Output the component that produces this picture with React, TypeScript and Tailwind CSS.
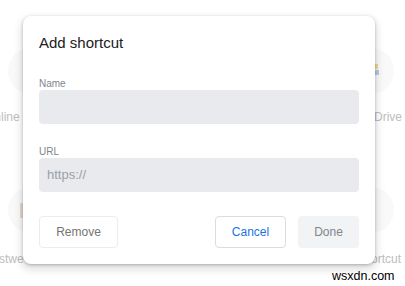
import React from "react";

export default function App() {
  const circle = "relative w-[48px] h-[46px] rounded-full bg-[#f9f9fa]";
  const label = "whitespace-nowrap text-[12px] leading-[14px] text-[#bdbdbd]";
  return (
    <div className="relative w-[405px] h-[286px] overflow-hidden bg-white font-['Liberation_Sans',Arial,sans-serif]">
      {/* background shortcut grid (dimmed, behind the modal) */}
      <div className="flex flex-col gap-[63px] pt-[48px]">
        <div className="flex justify-between">
          <div className="flex flex-col items-start gap-[16px]">
            <div className={`${circle} ml-[8px]`} />
            <div className={`${label} -ml-[15px]`}>Online</div>
          </div>
          <div className="flex flex-col items-end gap-[16px]">
            <div className={`${circle} mr-[11px]`}>
              <div className="absolute left-[29px] top-[16px] w-[3px] h-[5px] bg-[#f3d98a]" />
              <div className="absolute left-[29px] top-[22px] w-[4px] h-[5px] bg-[#b8c8ea]" />
            </div>
            <div className={`${label} mr-[3px]`}>Drive</div>
          </div>
        </div>
        <div className="flex justify-between">
          <div className="flex flex-col items-start gap-[19px]">
            <div className={`${circle} ml-[8px]`}>
              <div className="absolute left-[12px] top-[16px] w-[4px] h-[15px] bg-[#e6d8cf]" />
            </div>
            <div className={`${label} -ml-[1px]`}>stwe</div>
          </div>
          <div className="flex flex-col items-end gap-[19px]">
            <div className={`${circle} mr-[11px]`} />
            <div className={`${label} mr-[4px]`}>Shortcut</div>
          </div>
        </div>
      </div>

      {/* watermark */}
      <div className="absolute left-[332px] top-[269px] text-[12.5px] leading-[14px] text-black">wsxdn.com</div>

      {/* modal dialog */}
      <div className="absolute left-[23px] top-[16px] w-[352px] h-[248px] rounded-[8px] bg-white shadow-[0_1px_3px_rgba(0,0,0,0.25),0_4px_8px_2px_rgba(0,0,0,0.12)] flex flex-col px-[16px] pt-[17px]">
        <div className="text-[15px] leading-[20px] text-[#202124]">Add shortcut</div>

        <div className="mt-[24px] text-[10px] leading-[13px] text-[#80868b]">Name</div>
        <div className="h-[34px] w-[320px] rounded-[4px] bg-[#e8eaed]" />

        <div className="mt-[21px] text-[10px] leading-[13px] text-[#80868b]">URL</div>
        <div className="h-[34px] w-[320px] rounded-[4px] bg-[#e8eaed] flex items-center pl-[8px] text-[13px] text-[#9aa0a6]">
          https://
        </div>

        <div className="mt-[24px] flex items-center w-[320px]">
          <button className="h-[32px] w-[79px] rounded-[4px] border border-[#ececec] bg-white text-[12px] text-[#757575]">
            Remove
          </button>
          <div className="flex-1" />
          <button className="h-[32px] w-[71px] rounded-[4px] border border-[#dadce0] bg-white text-[12px] text-[#1a73e8]">
            Cancel
          </button>
          <button className="ml-[12px] h-[32px] w-[61px] rounded-[4px] bg-[#f1f3f4] text-[12px] text-[#80868b]">
            Done
          </button>
        </div>
      </div>
    </div>
  );
}
